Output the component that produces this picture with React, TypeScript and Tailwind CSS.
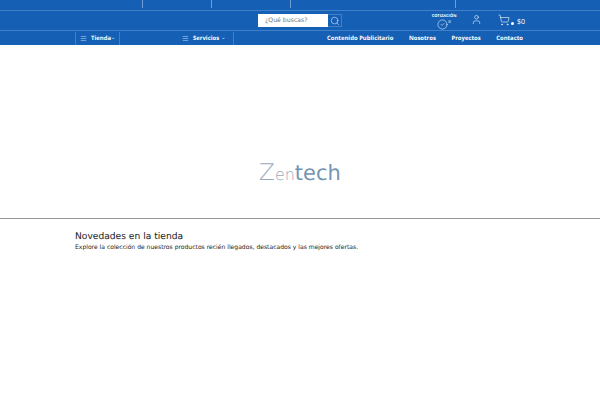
import { Menu, Search, User, ShoppingCart, CircleCheck } from 'lucide-react';

const topDividers = ['w-[143px]', 'w-[69px]', 'w-[79px]', 'w-[165px]'];

export default function App() {
  return (
    <div className="h-[400px] w-[600px] overflow-hidden bg-white font-['DejaVu_Sans',sans-serif] [text-rendering:geometricPrecision]">
      <header className="bg-[#1560b5] text-white">
        {/* top strip */}
        <div className="box-content flex h-[10px] border-b border-[#3f80c8]">
          {topDividers.map((w, idx) => (
            <div key={idx} className={`${w} h-[8px] border-r border-[#6f9fd6]`} />
          ))}
        </div>

        {/* search row */}
        <div className="box-content flex h-[19px] items-center border-b border-[#3f80c8]">
          <div className="ml-[258px] flex h-[13px] w-[84px]">
            <div className="flex w-[70px] items-center bg-white pl-[7px] text-[6.2px] text-[#777]">¿Qué buscas?</div>
            <div className="flex w-[14px] items-center justify-center border border-l-0 border-[#3f80c8]">
              <Search size={10} strokeWidth={1.2} />
            </div>
          </div>
          <div className="mt-[2px] ml-[90px] flex w-[24px] flex-col items-center">
            <span className="font-['Open_Sans',sans-serif] text-[4px] leading-[5px] font-bold">COTIZACIÓN</span>
            <div className="flex">
              <CircleCheck size={11} strokeWidth={1.2} />
              <span className="text-[4px] leading-[5px]">0</span>
            </div>
          </div>
          <User size={11} strokeWidth={1.2} className="mb-[2px] ml-[15px]" />
          <ShoppingCart size={12} strokeWidth={1.2} className="mb-[2px] ml-[16px]" />
          <span className="mt-[5px] ml-[1px] h-[3px] w-[3px] rounded-full bg-white" />
          <span className="mt-[5px] ml-[3px] font-['Open_Sans',sans-serif] text-[7px]">$0</span>
        </div>

        {/* nav row */}
        <nav className="flex h-[14px] items-center pt-[1px] font-['Open_Sans',sans-serif] text-[5.95px] font-bold">
          <div className="ml-[75px] flex h-full w-[45px] items-center border-x border-[#3f80c8] pl-[4px]">
            <Menu size={7} className="text-[#b9d3ef]" />
            <span className="ml-[4px]">Tienda</span>
            <span className="text-[5px] font-normal">⌄</span>
          </div>
          <div className="ml-[62px] flex h-full w-[52px] items-center border-r border-[#3f80c8]">
            <Menu size={7} className="text-[#b9d3ef]" />
            <span className="ml-[4px]">Servicios</span>
            <span className="ml-[2px] text-[5px] font-normal">⌄</span>
          </div>
          <span className="ml-[93px]">Contenido Publicitario</span>
          <span className="ml-[15.5px]">Nosotros</span>
          <span className="ml-[15.5px]">Proyectos</span>
          <span className="ml-[15.5px]">Contacto</span>
        </nav>
      </header>

      {/* banner */}
      <div className="flex h-[173px] items-center justify-center pt-[84px]">
        <div className="flex items-baseline leading-none">
          <span className="text-[23px] font-extralight text-[#9aa9ba]">Z</span>
          <span className="text-[16px] font-extralight text-[#9aa9ba]">en</span>
          <span className="text-[21px] font-normal text-[#7494b2]">tech</span>
        </div>
      </div>
      <hr className="border-t border-[#999]" />

      <section className="px-[75px] pt-[12px] text-[#222]">
        <h2 className="text-[9.15px] leading-[13px]">Novedades en la tienda</h2>
        <p className="text-[6.05px] leading-[8px]">Explore la colección de nuestros productos recién llegados, destacados y las mejores ofertas.</p>
      </section>
    </div>
  );
}
